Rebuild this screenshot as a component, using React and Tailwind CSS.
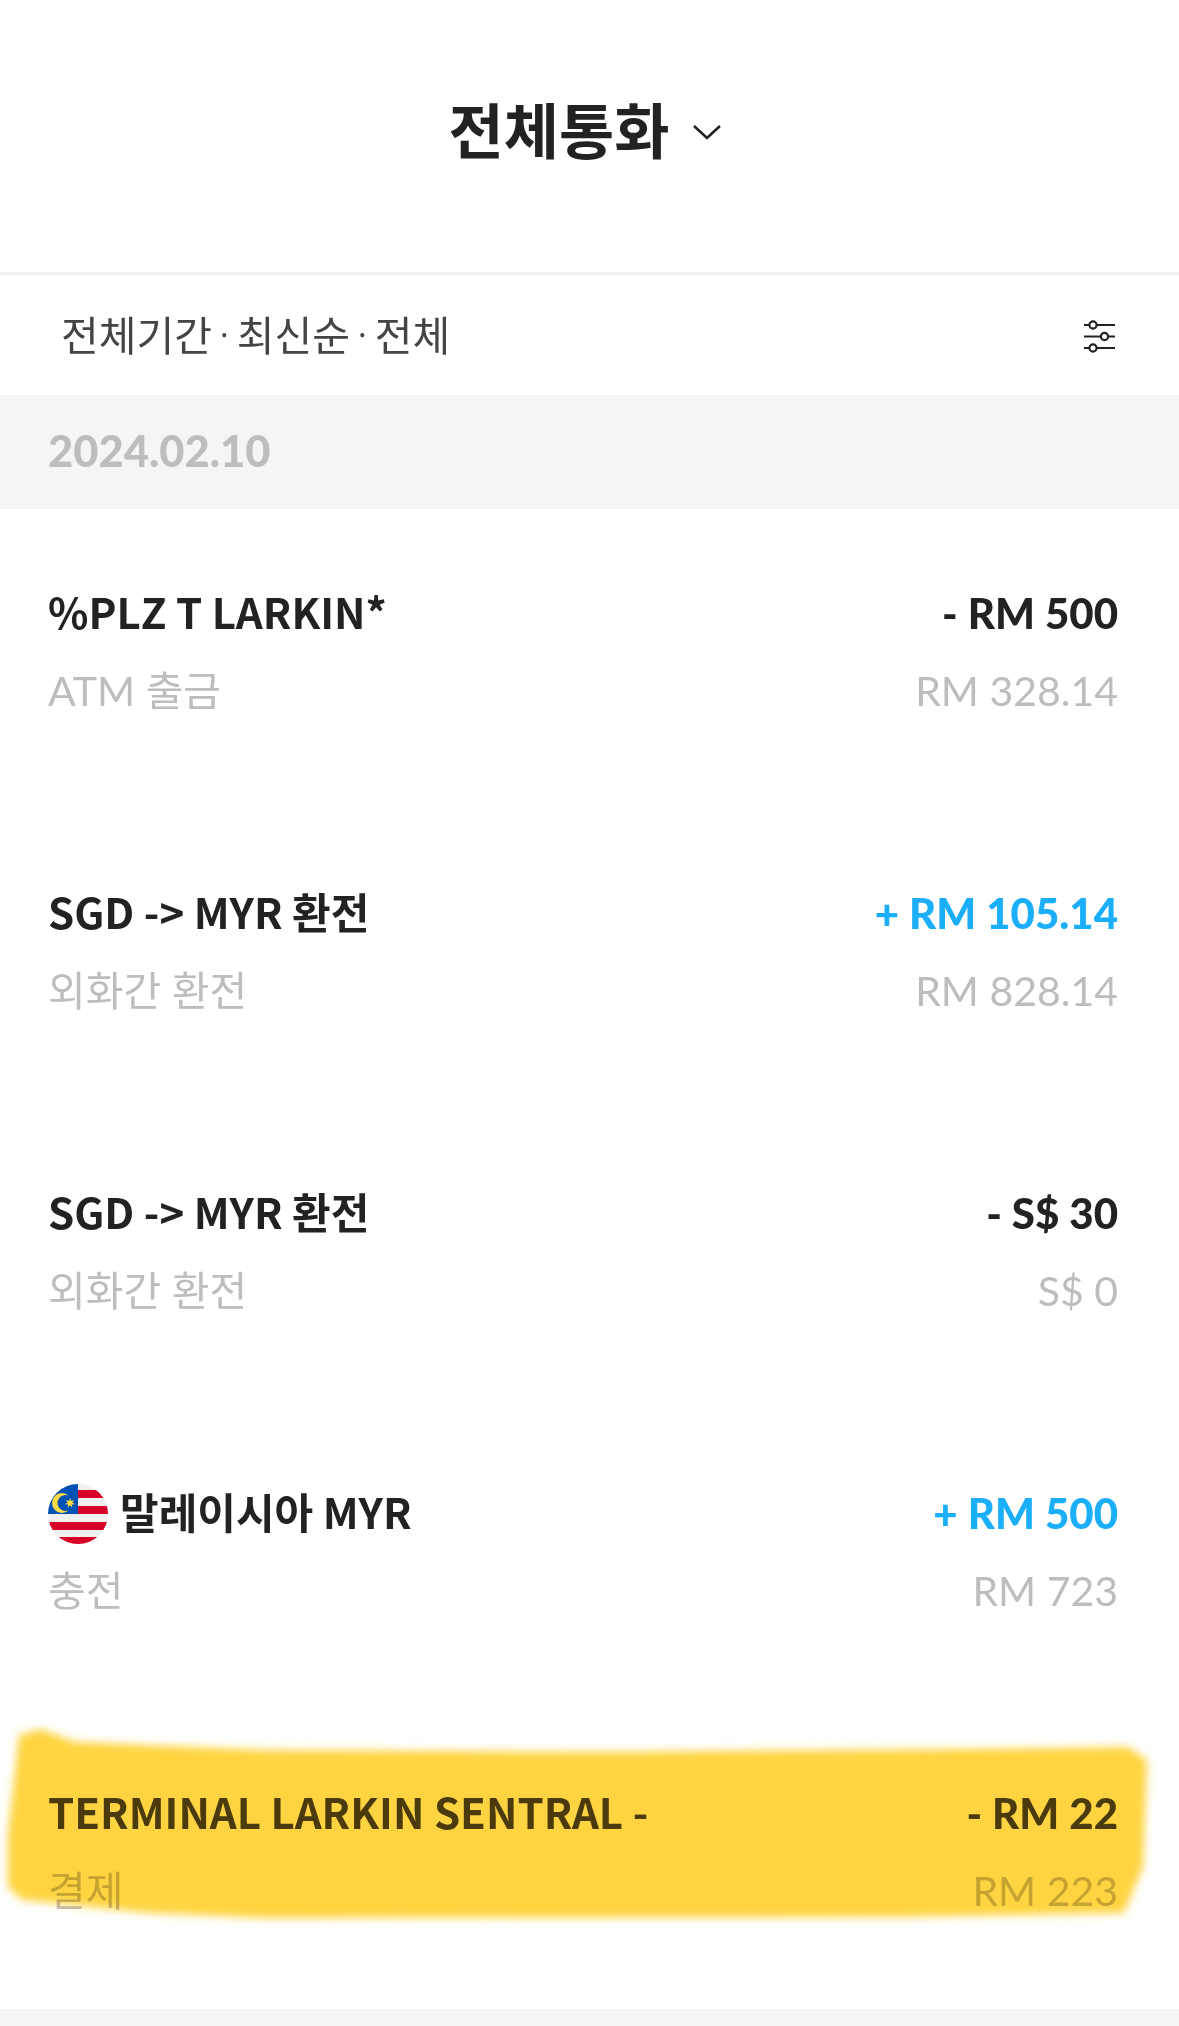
const FONT = "font-['Lato','Noto_Sans_CJK_KR',sans-serif]";

const rows = [
  { title: '%PLZ T LARKIN*', sub: 'ATM 출금', amount: '- RM 500', balance: 'RM 328.14' },
  { title: 'SGD -> MYR 환전', sub: '외화간 환전', amount: '+ RM 105.14', balance: 'RM 828.14', plus: true },
  { title: 'SGD -> MYR 환전', sub: '외화간 환전', amount: '- S$ 30', balance: 'S$ 0' },
  { title: '말레이시아 MYR', sub: '충전', amount: '+ RM 500', balance: 'RM 723', plus: true, flag: true },
  { title: 'TERMINAL LARKIN SENTRAL -', sub: '결제', amount: '- RM 22', balance: 'RM 223' },
];

// seven pointed star of the Malaysian flag
const starPoints = Array.from({ length: 14 }, (_, i) => {
  const r = i % 2 === 0 ? 5.2 : 2.3;
  const a = (Math.PI * i) / 7 - Math.PI / 2;
  return `${(22 + r * Math.cos(a)).toFixed(2)},${(19 + r * Math.sin(a)).toFixed(2)}`;
}).join(' ');

const MalaysiaFlag = () => (
  <svg width="60" height="60" viewBox="0 0 60 60" className="shrink-0 translate-y-[3px]">
    <defs>
      <clipPath id="flag-circle">
        <circle cx="30" cy="30" r="30" />
      </clipPath>
    </defs>
    <g clipPath="url(#flag-circle)">
      <rect width="60" height="60" fill="#f0f0f0" />
      <rect x="30" y="6" width="30" height="8" fill="#d80027" />
      <rect x="30" y="22" width="30" height="8" fill="#d80027" />
      <rect y="38" width="60" height="8" fill="#d80027" />
      <rect y="53" width="60" height="8" fill="#d80027" />
      <rect width="30" height="30" fill="#0052b4" />
      <path d="M20.9 11.75A10 10 0 1 0 20.9 26.25A8 8 0 1 1 20.9 11.75Z" fill="#ffda44" />
      <polygon points={starPoints} fill="#ffda44" />
    </g>
  </svg>
);

const FilterIcon = () => (
  <svg width="34" height="34" viewBox="0 0 34 34" fill="none" stroke="#222222" strokeWidth="2.2">
    <path d="M2 6h5.5M14.5 6H33M2 17.5h17M26 17.5h7M2 29h5.5M14.5 29H33" />
    <circle cx="11" cy="6" r="3.6" />
    <circle cx="22.5" cy="17.5" r="3.6" />
    <circle cx="11" cy="29" r="3.6" />
  </svg>
);

// marker stroke drawn over the last row, multiplied so the text shows through
const Highlight = () => (
  <svg className="absolute inset-0 mix-blend-multiply pointer-events-none" width="1179" height="300" viewBox="0 0 1179 300">
    <defs>
      <filter id="marker-blur" x="-5%" y="-10%" width="110%" height="120%">
        <feGaussianBlur stdDeviation="4" />
      </filter>
    </defs>
    <path
      d="M19 26 L41 20 L75 33 L263 41 L600 43 L977 40 L1128 38 L1147 51 L1143 158 L1124 204 L902 208 L263 209 L150 204 L22 191 L8 178 L8 124 Z"
      fill="#ffd43f"
      filter="url(#marker-blur)"
    />
  </svg>
);

const Row = ({ row, last }) => (
  <div className="relative h-[300px] pl-12 pr-[61px] pt-[78px]">
    <div className={`flex justify-between items-center h-[52px] text-[42px] font-black leading-[52px] ${last ? 'text-[#4a4630]' : 'text-[#222222]'}`}>
      <div className="flex items-center gap-3 whitespace-nowrap -translate-y-0.5">
        {row.flag && <MalaysiaFlag />}
        <span className="font-['Noto_Sans_CJK_KR',sans-serif] font-bold text-[42px]">{row.title}</span>
      </div>
      <span className={row.plus ? 'text-[#1aaefb]' : ''}>{row.amount}</span>
    </div>
    <div className={`flex justify-between items-center h-[52px] mt-[26px] leading-[52px] ${last ? 'text-[#c4c4c4]' : 'text-[#bdbdbd]'}`}>
      <span className="text-[41px] whitespace-nowrap">{row.sub}</span>
      <span className="text-[41px]">{row.balance}</span>
    </div>
    {last && <Highlight />}
  </div>
);

export default function App() {
  return (
    <div className={`${FONT} h-screen overflow-hidden bg-white flex flex-col`}>
      <header className="h-[275px] shrink-0 border-b-[3px] border-[#eeeeee] flex items-center justify-center gap-[23px] pb-[17px] pr-[8px]">
        <h1 className="font-['Noto_Sans_CJK_KR',sans-serif] text-[60px] font-bold leading-none text-[#222222]">전체통화</h1>
        <svg width="30" height="18" viewBox="0 0 30 18" fill="none" stroke="#222222" strokeWidth="2.6" className="mt-2">
          <path d="M2 3l13 12L28 3" />
        </svg>
      </header>

      <div className="h-[120px] shrink-0 flex items-center justify-between pl-[61px] pr-[63px]">
        <div className="font-['Noto_Sans_CJK_KR',sans-serif] text-[41px] text-[#444444] leading-none whitespace-nowrap flex items-center -translate-y-0.5">
          <span>전체기간</span>
          <span className="mx-[4px] text-[30px]">·</span>
          <span>최신순</span>
          <span className="mx-[4px] text-[30px]">·</span>
          <span>전체</span>
        </div>
        <div className="translate-y-px">
          <FilterIcon />
        </div>
      </div>

      <div className="h-[114px] shrink-0 bg-[#f5f5f5] flex items-center px-12 pb-0.5 text-[43.5px] font-black text-[#bdbdbd]">
        2024.02.10
      </div>

      {rows.map((row, i) => (
        <Row key={i} row={row} last={i === rows.length - 1} />
      ))}

      <div className="flex-1 bg-[#f5f5f5]" />
    </div>
  );
}
